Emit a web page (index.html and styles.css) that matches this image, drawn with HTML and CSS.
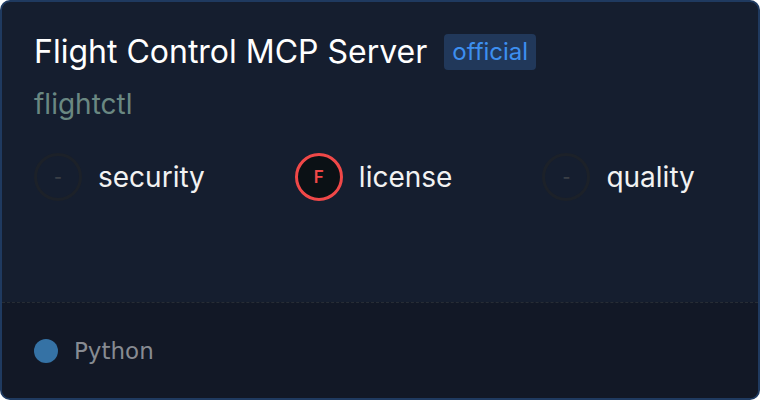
FILE: index.html
```html
<!DOCTYPE html>
<html>
<head>
<meta charset="utf-8">
<link rel="stylesheet" href="styles.css">
</head>
<body>
<div class="card">
  <div class="main">
    <div class="title-row">
      <h1 class="title">Flight Control MCP Server</h1>
      <span class="badge">official</span>
    </div>
    <div class="owner">flightctl</div>
    <div class="scores">
      <div class="score">
        <span class="ring ring-none">-</span>
        <span class="label">security</span>
      </div>
      <div class="score">
        <span class="ring ring-f">F</span>
        <span class="label">license</span>
      </div>
      <div class="score">
        <span class="ring ring-none">-</span>
        <span class="label">quality</span>
      </div>
    </div>
  </div>
  <div class="footer">
    <span class="lang-dot"></span>
    <span class="lang">Python</span>
  </div>
</div>
</body>
</html>
```

FILE: styles.css
```css
html, body {
  margin: 0;
  padding: 0;
  background: #ffffff;
}

.card {
  width: 760px;
  height: 400px;
  box-sizing: border-box;
  border: 2px solid #1f3a60;
  border-radius: 10px;
  background: #151e2f;
  overflow: hidden;
  display: flex;
  flex-direction: column;
  font-family: Inter, "Noto Sans", sans-serif;
}

.main {
  flex: 1;
  padding: 32px 0 0 32px;
}

.title-row {
  display: flex;
  align-items: center;
  gap: 17px;
}

.title {
  margin: 0;
  font-size: 32px;
  line-height: 36px;
  font-weight: 400;
  color: #ffffff;
}

.badge {
  height: 36px;
  line-height: 36px;
  padding: 0 8px;
  border-radius: 4px;
  background: #21385a;
  color: #3d8ff0;
  font-size: 24px;
}

.owner {
  margin-top: 17px;
  font-size: 28px;
  line-height: 34px;
  color: #6a8882;
}

.scores {
  display: flex;
  gap: 90px;
  margin-top: 32px;
}

.score {
  display: flex;
  align-items: center;
  gap: 16px;
}

.ring {
  width: 48px;
  height: 48px;
  box-sizing: border-box;
  border-radius: 50%;
  border: 3px solid #1c2129;
  display: flex;
  align-items: center;
  justify-content: center;
  font-size: 17px;
  font-weight: 600;
}

.ring-none {
  color: #3a3f46;
}

.ring-f {
  border-color: #f04848;
  background: #0b1115;
  color: #f04848;
}

.label {
  font-size: 28px;
  line-height: 34px;
  color: #f2f2f2;
}

.footer {
  height: 96px;
  box-sizing: border-box;
  border-top: 1px dashed #272d35;
  background: #121826;
  display: flex;
  align-items: center;
  padding-left: 32px;
  gap: 16px;
}

.lang-dot {
  width: 24px;
  height: 24px;
  border-radius: 50%;
  background: #3572a5;
}

.lang {
  font-family: "DejaVu Sans", sans-serif;
  font-size: 23px;
  color: #878b92;
}
```
